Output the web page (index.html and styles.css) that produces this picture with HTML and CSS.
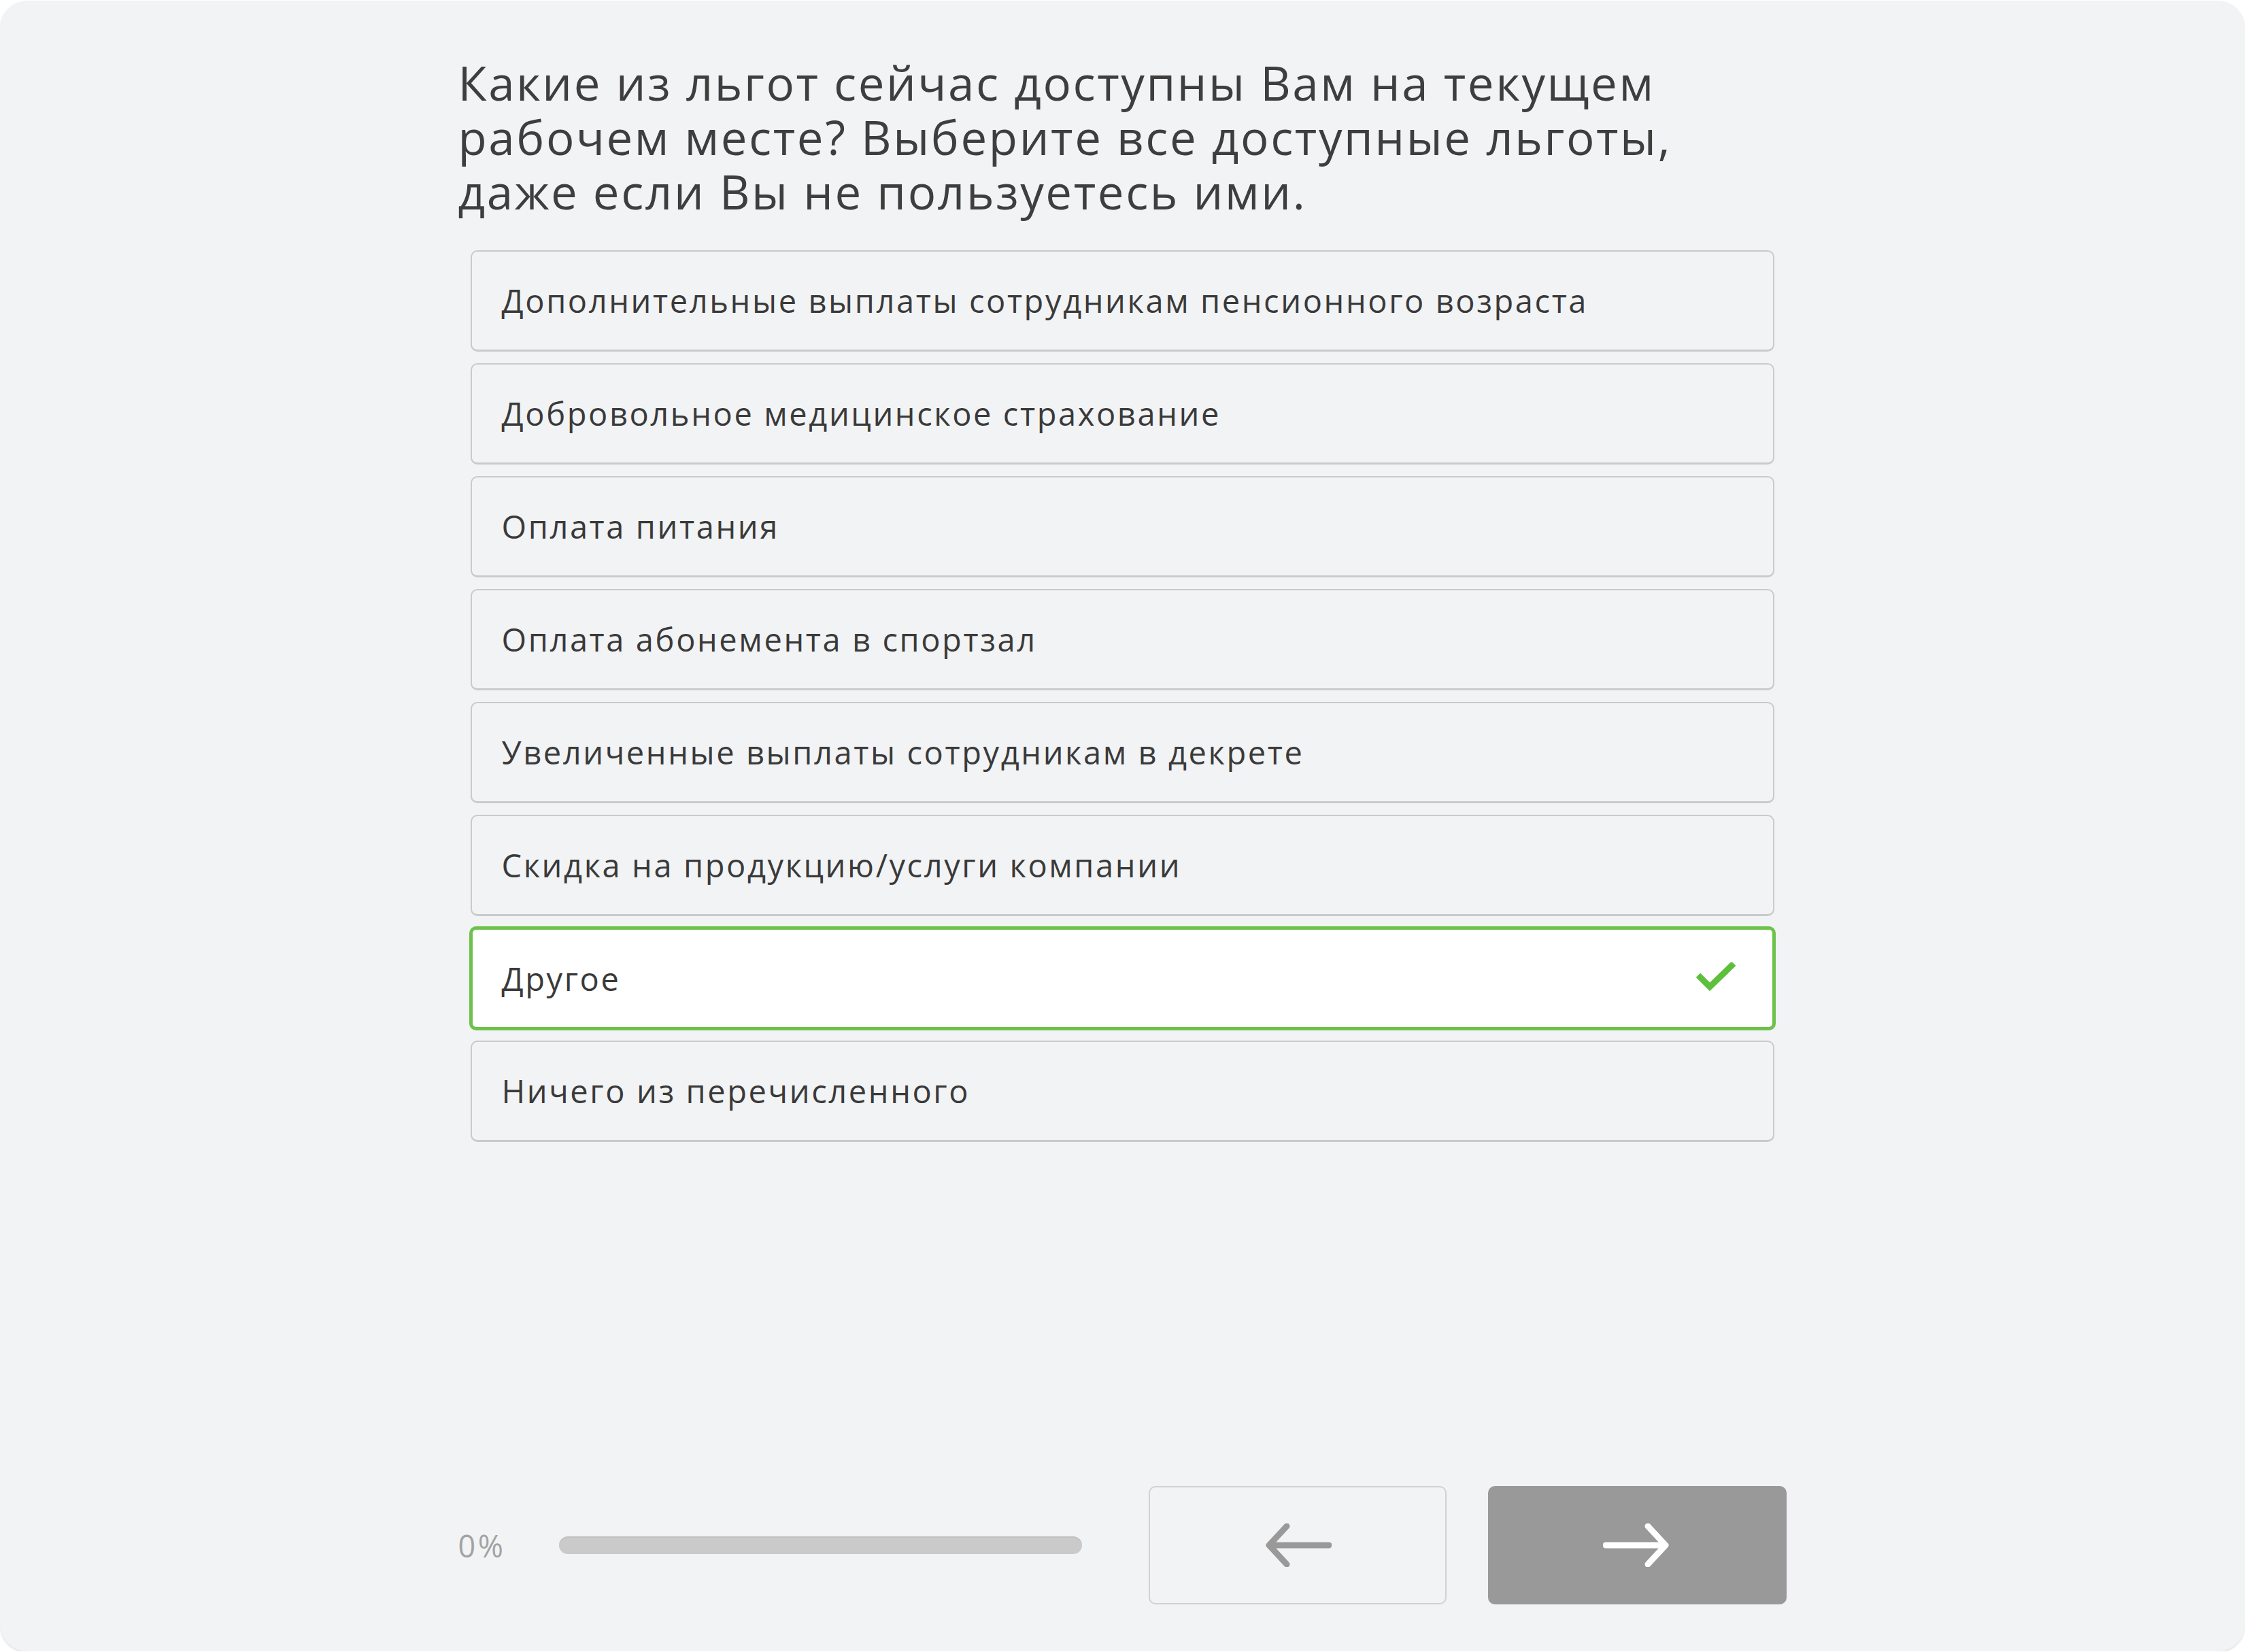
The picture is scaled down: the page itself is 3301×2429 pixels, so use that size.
FILE: index.html
```html
<!DOCTYPE html>
<html lang="ru">
<head>
<meta charset="utf-8">
<title>Опрос</title>
<link rel="stylesheet" href="styles.css">
</head>
<body>
<div class="card">
  <div class="content">
    <h1 class="title">Какие из льгот сейчас доступны Вам на текущем<br>рабочем месте? Выберите все доступные льготы,<br>даже если Вы не пользуетесь ими.</h1>
    <ul class="options">
      <li class="option">Дополнительные выплаты сотрудникам пенсионного возраста</li>
      <li class="option">Добровольное медицинское страхование</li>
      <li class="option">Оплата питания</li>
      <li class="option">Оплата абонемента в спортзал</li>
      <li class="option">Увеличенные выплаты сотрудникам в декрете</li>
      <li class="option">Скидка на продукцию/услуги компании</li>
      <li class="option selected">Другое
        <svg class="check" viewBox="0 0 60 48" width="60" height="48"><polyline points="6,22 20,36 52,5" fill="none" stroke="#5dbf3c" stroke-width="9" stroke-linecap="square"/></svg>
      </li>
      <li class="option">Ничего из перечисленного</li>
    </ul>
    <div class="footer">
      <div class="percent">0%</div>
      <div class="progress"></div>
      <button class="nav prev" type="button">
        <svg viewBox="0 0 100 64" width="100" height="64"><path d="M96 32H10M34 4L8 32L34 60" fill="none" stroke="#999999" stroke-width="9" stroke-linecap="round" stroke-linejoin="round"/></svg>
      </button>
      <button class="nav next" type="button">
        <svg viewBox="0 0 100 64" width="100" height="64"><path d="M4 32H90M66 4L92 32L66 60" fill="none" stroke="#ffffff" stroke-width="9" stroke-linecap="round" stroke-linejoin="round"/></svg>
      </button>
    </div>
  </div>
</div>
</body>
</html>
```
FILE: styles.css
```css
html, body {
  margin: 0;
  padding: 0;
  background: #ffffff;
}
body {
  font-family: "Open Sans", "Noto Sans", sans-serif;
  color: #3d3d3d;
}
.card {
  box-sizing: border-box;
  width: 3301px;
  height: 2427px;
  margin-top: 1px;
  background: #f2f3f5;
  border-radius: 40px;
  box-shadow: 0 2px 3px rgba(0, 0, 0, 0.12);
  display: flex;
  flex-direction: column;
}
.content {
  box-sizing: border-box;
  width: 1954px;
  margin: 0 auto;
  flex: 1;
  display: flex;
  flex-direction: column;
  padding-bottom: 69px;
}
.title {
  margin: 80px 0 0 0;
  font-size: 69px;
  font-weight: 400;
  line-height: 80px;
  color: #3e3e3e;
  letter-spacing: 2.6px;
}
.options {
  list-style: none;
  margin: 47px 0 0 0;
  padding: 0 19px 0 18px;
  display: flex;
  flex-direction: column;
  gap: 17px;
}
.option {
  box-sizing: border-box;
  height: 149px;
  border: 2px solid #c9cacc;
  border-bottom-width: 3px;
  border-radius: 10px;
  padding: 0 40px 0 44px;
  display: flex;
  align-items: center;
  justify-content: space-between;
  font-size: 47px;
  letter-spacing: 2.6px;
  color: #3a3a3a;
}
.option.selected {
  background: #ffffff;
  border: 5px solid #6cc24a;
  margin: -2px -2px;
  height: 153px;
  padding-left: 43px;
}
.check {
  display: block;
  margin-right: 12px;
}
.footer {
  margin-top: auto;
  display: flex;
  align-items: center;
}
.percent {
  width: 148px;
  font-size: 45px;
  letter-spacing: 3.5px;
  color: #a3a3a3;
}
.progress {
  width: 769px;
  height: 26px;
  border-radius: 13px;
  background: #cacaca;
  box-shadow: inset 0 2px 1px rgba(0, 0, 0, 0.05);
}
.nav {
  box-sizing: border-box;
  height: 174px;
  border-radius: 10px;
  display: flex;
  align-items: center;
  justify-content: center;
  padding: 0;
  font: inherit;
}
.prev {
  width: 438px;
  margin-left: 98px;
  background: #f2f3f5;
  border: 2px solid #d2d2d2;
}
.next {
  width: 439px;
  margin-left: 61px;
  background: #999999;
  border: none;
}
```
